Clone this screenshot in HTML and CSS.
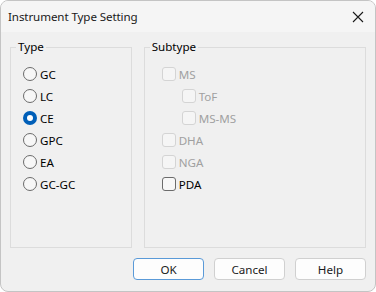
FILE: index.html
```html
<!DOCTYPE html>
<html>
<head>
<meta charset="utf-8">
<link rel="stylesheet" href="styles.css">
</head>
<body>
<div class="window">
  <div class="titlebar">
    <span class="title">Instrument Type Setting</span>
    <svg class="close" width="12" height="12" viewBox="0 0 12 12"><path d="M1 1 L11 11 M11 1 L1 11" stroke="#1a1a1a" stroke-width="1.1" fill="none"/></svg>
  </div>
  <div class="client">
    <div class="groups">
      <fieldset class="group type">
        <legend>Type</legend>
        <div class="items">
          <div class="row"><span class="radio"></span><span>GC</span></div>
          <div class="row"><span class="radio"></span><span>LC</span></div>
          <div class="row"><span class="radio on"></span><span>CE</span></div>
          <div class="row"><span class="radio"></span><span>GPC</span></div>
          <div class="row"><span class="radio"></span><span>EA</span></div>
          <div class="row"><span class="radio"></span><span>GC-GC</span></div>
        </div>
      </fieldset>
      <fieldset class="group sub">
        <legend>Subtype</legend>
        <div class="items">
          <div class="row dis"><span class="check"></span><span>MS</span></div>
          <div class="row dis indent"><span class="check"></span><span>ToF</span></div>
          <div class="row dis indent"><span class="check"></span><span>MS-MS</span></div>
          <div class="row dis"><span class="check"></span><span>DHA</span></div>
          <div class="row dis"><span class="check"></span><span>NGA</span></div>
          <div class="row"><span class="check"></span><span>PDA</span></div>
        </div>
      </fieldset>
    </div>
    <div class="buttons">
      <button class="btn default">OK</button>
      <button class="btn">Cancel</button>
      <button class="btn">Help</button>
    </div>
  </div>
</div>
</body>
</html>
```
FILE: styles.css
```css
html, body {
  margin: 0;
  padding: 0;
  background: #ffffff;
}
body {
  font-family: "Noto Sans", "Open Sans", sans-serif;
  font-size: 11.6px;
  color: #000;
}
.window {
  width: 376px;
  height: 292px;
  box-sizing: border-box;
  border: 1px solid #c4c4c4;
  border-radius: 8px;
  overflow: hidden;
  display: flex;
  flex-direction: column;
  background: #f0f0f0;
}
.titlebar {
  height: 31px;
  flex: none;
  background: #f5f5f5;
  display: flex;
  align-items: center;
  justify-content: space-between;
  padding: 0 11px 0 7px;
}
.title {
  font-size: 11.6px;
  letter-spacing: -0.1px;
  color: #1a1a1a;
}
.close {
  display: block;
}
.client {
  flex: 1;
  display: flex;
  flex-direction: column;
  padding: 7px 9px 0 9px;
}
.groups {
  display: flex;
  gap: 12px;
  height: 209px;
}
.group {
  margin: 0;
  border: 1px solid #dcdcdc;
  border-radius: 0;
  padding: 0;
  box-sizing: border-box;
}
.group legend {
  padding: 0 2px;
  margin-left: 5px;
  line-height: 16px;
  color: #000;
}
.items {
  padding-top: 8px;
}
.type { width: 122px; }
.type .items { padding-left: 12px; }
.sub { width: 223px; }
.sub .items { padding-left: 17px; }
.row {
  height: 22px;
  display: flex;
  align-items: center;
  gap: 3px;
}
.row.indent { padding-left: 20px; }
.radio {
  width: 14px;
  height: 14px;
  border-radius: 50%;
  border: 1px solid #6b6b6b;
  background: #f7f7f7;
  box-sizing: border-box;
  flex: none;
  display: flex;
  align-items: center;
  justify-content: center;
}
.radio.on {
  border: none;
  background: #005fb8;
}
.radio.on::after {
  content: "";
  width: 6px;
  height: 6px;
  border-radius: 50%;
  background: #fff;
}
.check {
  width: 14px;
  height: 14px;
  border-radius: 3px;
  border: 1px solid #6b6b6b;
  background: #f7f7f7;
  box-sizing: border-box;
  flex: none;
}
.dis { color: #a0a0a0; }
.dis .check {
  border-color: #d4d4d4;
  background: #f5f5f5;
}
.buttons {
  display: flex;
  justify-content: flex-end;
  gap: 10px;
  padding-top: 10px;
}
.btn {
  width: 71px;
  height: 22px;
  font-family: "Noto Sans", "Open Sans", sans-serif;
  font-size: 11.6px;
  color: #1a1a1a;
  background: #fdfdfd;
  border: 1px solid #d0d0d0;
  border-radius: 4px;
  padding: 0;
}
.btn.default {
  border-color: #5a9ad8;
}
```
